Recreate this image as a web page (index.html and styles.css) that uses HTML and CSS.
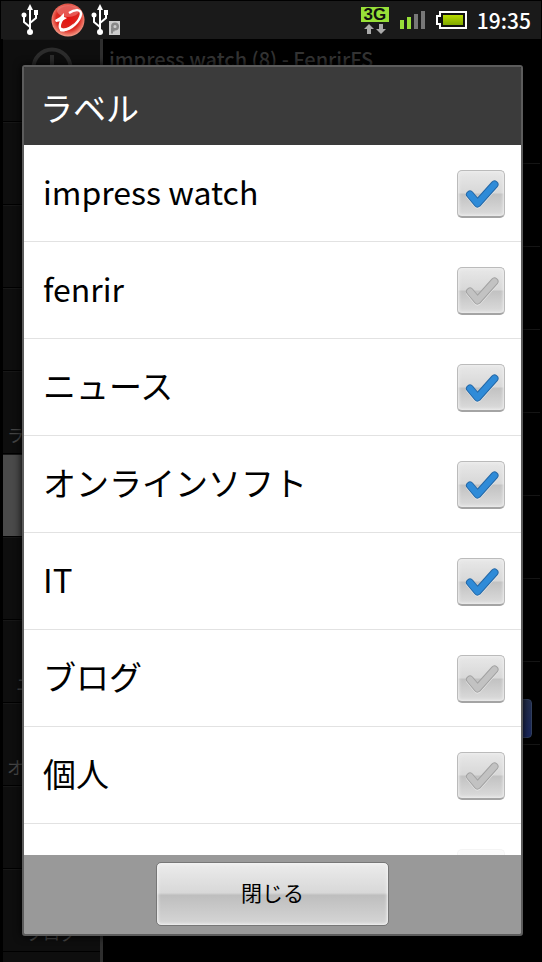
FILE: index.html
```html
<!DOCTYPE html>
<html lang="ja">
<head>
<meta charset="utf-8">
<meta name="viewport" content="width=device-width, initial-scale=1">
<title>ラベル</title>
<link rel="stylesheet" href="styles.css">
</head>
<body>
<svg class="defs" aria-hidden="true">
  <defs>
    <linearGradient id="cell" x1="0" y1="0" x2="0" y2="1"><stop offset="0" stop-color="#b9dc00"/><stop offset="1" stop-color="#80a800"/></linearGradient>
    <radialGradient id="ball" cx=".5" cy=".45" r=".55"><stop offset="0" stop-color="#e5120f"/><stop offset=".65" stop-color="#dc2a22"/><stop offset="1" stop-color="#f5a08c"/></radialGradient>
    <symbol id="usb" viewBox="0 0 18 32">
      <g fill="none" stroke="#fff" stroke-width="2"><path d="M9 27V5M9 23L3 18V11M9 19L15 14V9"/></g>
      <g fill="#fff"><path d="M9 0L12 6H6Z"/><circle cx="9" cy="28" r="3"/><circle cx="3" cy="11" r="2.5"/><path d="M13 6h4v5h-4z"/></g>
    </symbol>
    <symbol id="tick" viewBox="0 0 48 48">
      <g fill="none" stroke-linecap="round" stroke-linejoin="round">
        <path class="tick-light" d="M13 25.500L20.500 34.500L37.500 15.500" stroke-width="8"/>
        <path class="tick-edge" d="M13 24.500L20.500 33.500L37.500 14.500" stroke-width="8"/>
        <path class="tick-fill" d="M13 24.500L20.500 33.500L37.500 14.500" stroke-width="6"/>
      </g>
    </symbol>
  </defs>
</svg>
<div class="screen">
  <header class="status">
    <div class="notices">
      <svg class="usb"><use href="#usb"/></svg>
      <svg class="ball" viewBox="0 0 34 34"><circle cx="17" cy="17" r="16.500" fill="url(#ball)"/><ellipse cx="17" cy="8" rx="11" ry="6" fill="#fff" opacity=".25"/><path d="M18 10C24 6 30 6 30 11C29 18 20 27 13 27C7 27 8 21 12 15" fill="none" stroke="#fff" stroke-width="2.400"/><path d="M4 17L9 14L13 10V14L16 15L11 18L5 19ZM9 24C12 27 18 25 23 20C18 27 13 30 9 28Z" fill="#fff"/></svg>
      <svg class="usb"><use href="#usb"/></svg>
      <svg class="badge" viewBox="0 0 11 14"><path d="M0 0H11V14H0Z" fill="#ccc"/><circle cx="6" cy="5.500" r="2.800" fill="none" stroke="#888" stroke-width="2.400"/><path d="M3 7V12.500M2 9.500H5.500" stroke="#888" stroke-width="2"/></svg>
    </div>
    <div class="meters">
      <div class="network"><span class="g3">3G</span><svg class="arrows" viewBox="0 0 24 10"><path d="M6 0L11 5H8V10H4V5H1ZM18 10L13 5H16V0H20V5H23Z" fill="#aaa"/></svg></div>
      <svg class="signal" viewBox="0 0 26 18"><path d="M0 9H4V18H0ZM7 6H11V18H7Z" fill="#98e038"/><path d="M14 3H18V18H14ZM21 0H25V18H21Z" fill="#777"/></svg>
      <svg class="battery" viewBox="0 0 31 18"><path d="M4 1H30V17H4V13H1V5H4Z" fill="#111" stroke="#fff" stroke-width="2"/><path d="M7 4H27V14H7Z" fill="url(#cell)"/></svg>
      <time class="clock">19:35</time>
    </div>
  </header>
  <div class="app">
    <nav class="side">
      <div class="side-item"><svg class="info" viewBox="0 0 42 42"><circle cx="21" cy="21" r="18.500" fill="none" stroke="#2c2c2c" stroke-width="4"/><path d="M21 8V26" stroke="#2c2c2c" stroke-width="4"/></svg></div>
      <div class="side-item"></div>
      <div class="side-item"></div>
      <div class="side-item"></div>
      <div class="side-item caption">ラ</div>
      <div class="side-item current"></div>
      <div class="side-item"></div>
      <div class="side-item caption indent">ニ</div>
      <div class="side-item caption">オ</div>
      <div class="side-item"></div>
      <div class="side-item name">ブログ</div>
    </nav>
    <main class="feed">
      <h1 class="feed-title">impress watch (8) - FenrirFS</h1>
      <div class="feed-row"></div><div class="feed-row"></div><div class="feed-row"></div><div class="feed-row"></div>
      <div class="feed-row"></div><div class="feed-row"></div><div class="feed-row"></div><div class="feed-row"><span class="chip"></span></div>
    </main>
  </div>
  <section class="dialog" role="dialog" aria-labelledby="dialog-title">
    <h2 class="dialog-title" id="dialog-title">ラベル</h2>
    <div class="list">
      <label class="row"><span class="label latin">impress watch</span><span class="box"><input type="checkbox" checked><svg class="tick"><use href="#tick"/></svg></span></label>
      <label class="row"><span class="label latin">fenrir</span><span class="box"><input type="checkbox"><svg class="tick"><use href="#tick"/></svg></span></label>
      <label class="row"><span class="label">ニュース</span><span class="box"><input type="checkbox" checked><svg class="tick"><use href="#tick"/></svg></span></label>
      <label class="row"><span class="label">オンラインソフト</span><span class="box"><input type="checkbox" checked><svg class="tick"><use href="#tick"/></svg></span></label>
      <label class="row"><span class="label">IT</span><span class="box"><input type="checkbox" checked><svg class="tick"><use href="#tick"/></svg></span></label>
      <label class="row"><span class="label">ブログ</span><span class="box"><input type="checkbox"><svg class="tick"><use href="#tick"/></svg></span></label>
      <label class="row"><span class="label">個人</span><span class="box"><input type="checkbox"><svg class="tick"><use href="#tick"/></svg></span></label>
      <div class="row faded"><span class="box"></span></div>
    </div>
    <footer class="actions"><button class="close" type="button">閉じる</button></footer>
  </section>
</div>
</body>
</html>
```
FILE: styles.css
```css
* { box-sizing: border-box; }
body {
  margin: 0;
  background: #000;
  font-family: "Noto Sans CJK JP", sans-serif;
}
.defs { position: absolute; width: 0; height: 0; }
.screen {
  position: relative;
  display: flex;
  flex-direction: column;
  height: 100vh;
  overflow: hidden;
}
.status {
  flex: none;
  display: flex;
  justify-content: space-between;
  height: 38px;
  margin: 1px 1px 0;
  padding: 0 10px 0 20px;
  background: #1a1a1a;
}
.notices, .meters { display: flex; align-items: center; }
.usb { width: 18px; height: 32px; }
.ball { width: 34px; height: 34px; margin: 0 6px 0 12px; }
.badge { width: 11px; height: 14px; align-self: flex-end; margin-bottom: 4px; }
.network { display: flex; flex-direction: column; align-items: center; gap: 2px; margin-right: 11px; }
.g3 {
  width: 28px;
  background: #98e038;
  color: #111;
  font: bold 17px/15px "Liberation Sans", sans-serif;
  text-align: center;
}
.arrows { width: 24px; height: 10px; }
.signal { width: 26px; height: 18px; margin-right: 10px; }
.battery { width: 31px; height: 18px; margin-right: 10px; }
.clock { color: #fff; font: 500 21px/34px "Noto Sans CJK JP", sans-serif; }
.app { flex: 1; display: flex; min-height: 0; overflow: hidden; padding: 0 2px 0 3px; }
.side { flex: none; width: 100px; background: #0e0e0e; border-right: 3px solid #2e2e2e; }
.side-item {
  height: 83px;
  border-bottom: 1px solid #000;
  box-shadow: inset 0 1px #171717;
  color: #444;
  font-size: 17px;
  line-height: 24px;
  white-space: nowrap;
  overflow: hidden;
}
.info { display: block; width: 42px; height: 42px; margin: 8px auto 0 28px; }
.caption { padding: 52px 0 0 4px; }
.indent { padding-left: 13px; }
.name { padding: 52px 0 0; text-align: center; }
.current { background: #4a4a4a; }
.feed { flex: 1; min-width: 0; }
.feed-title { margin: 0; height: 42px; padding: 3px 6px; color: #333; font-size: 20px; line-height: 34px; font-weight: 500; }
.feed-row { height: 83px; border-bottom: 1px solid #151515; }
.feed-row:last-child { display: flex; align-items: flex-end; justify-content: flex-end; padding: 0 8px 6px 0; }
.chip { width: 60px; height: 39px; border: 1px solid #32405f; border-radius: 4px; background: linear-gradient(#25304f, #1a2860); }
.dialog {
  position: absolute;
  inset: 65px 19px 26px 22px;
  display: flex;
  flex-direction: column;
  border: 2px solid #5c5c5c;
  border-radius: 3px;
  overflow: hidden;
  box-shadow: 0 0 8px #000;
}
.dialog-title {
  flex: none;
  height: 78px;
  margin: 0;
  padding: 0 16px;
  background: #3b3b3b;
  color: #fff;
  font-size: 33px;
  line-height: 80px;
  font-weight: 400;
}
.list { flex: 1; min-height: 0; overflow: hidden; background: #fff; }
.row {
  display: flex;
  align-items: center;
  justify-content: space-between;
  height: 97px;
  padding: 2px 16px 0 19px;
  border-bottom: 1px solid #e2e2e2;
  color: #000;
}
.label { padding-bottom: 6px; font-size: 33px; line-height: 48px; }
.latin { font-size: 32px; }
.box {
  position: relative;
  width: 48px;
  height: 48px;
  border: 1px solid #bbb;
  border-bottom: 2px solid #a4a4a4;
  border-radius: 5px;
  background: linear-gradient(#e8e8e8, #d8d8d8 48%, #c2c2c2 52%, #dcdcdc);
  box-shadow: inset 0 0 3px 1px #eee;
}
.box input { position: absolute; inset: 0; width: 100%; height: 100%; margin: 0; opacity: 0; }
.tick { position: absolute; inset: -1px; width: 48px; height: 48px; pointer-events: none; --edge: #a2a2a2; --fill: #c2c2c2; }
input:checked + .tick { --edge: #2568a6; --fill: #2f8bd8; }
.tick-light { stroke: #e6e6e6; }
.tick-edge { stroke: var(--edge); }
.tick-fill { stroke: var(--fill); }
.faded .box { margin-left: auto; opacity: .15; }
.actions { flex: none; display: flex; justify-content: center; height: 79px; padding: 7px 0 8px; background: #999; }
.close {
  width: 47%;
  padding: 0 4px 4px;
  border: 1px solid #777;
  border-radius: 5px;
  background: linear-gradient(#ececec, #d8d8d8 48%, #bebebe 52%, #d6d6d6);
  box-shadow: inset 0 0 3px 1px #f4f4f4;
  color: #000;
  font-family: inherit;
  font-size: 21px;
}
```
